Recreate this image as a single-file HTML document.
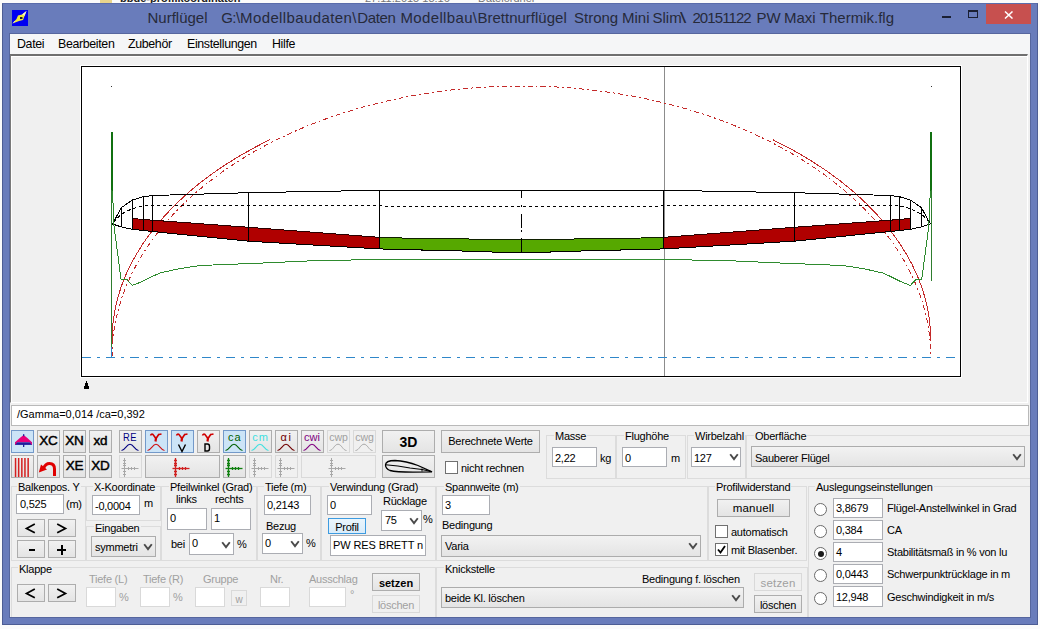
<!DOCTYPE html>
<html><head><meta charset="utf-8">
<style>
*{margin:0;padding:0;box-sizing:border-box}
html,body{width:1040px;height:629px;overflow:hidden;background:#fbfbfb;font-family:"Liberation Sans",sans-serif;font-size:11px;color:#000}
.a{position:absolute}
.t{position:absolute;white-space:nowrap;line-height:13px}
#frame{left:2px;top:3px;width:1036px;height:622px;background:#697cbb;border:1px solid #4d5d94;border-top-color:#5a6cab}
#inner{left:9px;top:33px;width:1022px;height:585px;border:1px solid #56669e}
.ti{top:9px;font-size:15px;color:#262a3a;line-height:18px}
#menubar{left:10px;top:34px;width:1020px;height:20px;background:#f5f6f7}
.mi{position:absolute;top:3px;font-size:12.4px;line-height:15px;color:#000;letter-spacing:-0.35px}
#client{left:10px;top:54px;width:1020px;height:563px;background:#f0f0f0}
#gpanel{left:10px;top:54px;width:1018px;height:349px;border-top:2px solid #6f6f6f;border-left:1px solid #7a7a7a;border-right:1px solid #fff;border-bottom:1px solid #fff;box-shadow:inset 1px 1px 0 #fff}
.inp{position:absolute;background:#fff;border:1px solid #abadb3}
.btn{position:absolute;background:linear-gradient(#f1f1f1,#e4e4e4);border:1px solid #adadad}
.btnh{position:absolute;background:#cce4f7;border:1px solid #7399c9}
.btnd{position:absolute;background:#f0f0f0;border:1px solid #d9d9d9}
.gl{position:absolute;border:1px solid #dcdcdc}
.g{color:#a0a0a0}
.l{letter-spacing:-0.25px;margin-top:1px}
.bb{text-align:center;font-size:15px;font-weight:bold;line-height:15px}
.dd{position:absolute;background:linear-gradient(#f2f2f2,#e4e4e4);border:1px solid #acacac}
.chev{position:absolute;width:7px;height:7px;border-right:2px solid #3c3c3c;border-bottom:2px solid #3c3c3c;transform:rotate(45deg) scale(0.8,0.8)}
.cb{position:absolute;width:13px;height:13px;background:#fff;border:1px solid #707070}
.rad{position:absolute;width:13px;height:13px;border-radius:50%;background:#fff;border:1px solid #6a6a6a}
.dis{border-color:#d9d9d9}
</style></head><body>
<!-- background explorer strip -->
<div class="a" style="left:100px;top:0;width:12px;height:3px;background:#e8d48c"></div>
<div class="t" style="left:120px;top:-8px;font-weight:bold;font-size:11px;color:#222">bbde-profilkoordinaten</div>
<div class="t" style="left:365px;top:-8px;font-size:11px;color:#777">27.11.2015 18:16</div>
<div class="t" style="left:478px;top:-8px;font-size:11px;color:#777">Dateiordner</div>

<div id="frame" class="a"></div><div id="inner" class="a"></div>
<!-- app icon -->
<svg class="a" style="left:12px;top:10px" width="16" height="16" viewBox="0 0 16 16">
<rect width="16" height="16" fill="#0000f0"/>
<path d="M0.5 13.5 L4.5 9 L6 5.5 L10 4.5 L14.5 1 L12.5 6 L11 10 L7 11 Z" fill="#f2ea3a"/>
<path d="M10 4.5 L14.5 1 L12.5 6 L11.5 5 Z" fill="#f4f4d0"/>
<path d="M0.5 13.5 L2.5 11 L3.5 11.5 Z" fill="#f4f4d0"/>
<rect x="8" y="7" width="2.5" height="2" fill="#1a1a40"/>
</svg>
<div class="t ti" style="left:147.5px">Nurflügel</div><div class="t ti" style="left:221.2px;letter-spacing:-0.5px">G:\</div><div class="t ti" style="left:240px;letter-spacing:0.4px">Modellbaudaten\</div><div class="t ti" style="left:357.3px;letter-spacing:-0.4px">Daten</div><div class="t ti" style="left:400.5px;letter-spacing:0.35px">Modellbau\</div><div class="t ti" style="left:477.5px">Brettnurflügel</div><div class="t ti" style="left:574px">Strong</div><div class="t ti" style="left:622px">Mini</div><div class="t ti" style="left:652.5px">Slim</div><div class="t ti" style="left:680px;transform:scaleX(1.5);transform-origin:left">\</div><div class="t ti" style="left:692.4px;letter-spacing:-0.9px">20151122</div><div class="t ti" style="left:756.5px">PW</div><div class="t ti" style="left:783.9px">Maxi</div><div class="t ti" style="left:819.8px">Thermik.flg</div>
<!-- window buttons -->
<div class="a" style="left:942px;top:16px;width:9px;height:2px;background:#1a1f33"></div>
<div class="a" style="left:968px;top:10px;width:10px;height:8px;border:1px solid #1a1f33;border-top-width:2px"></div>
<div class="a" style="left:986px;top:4px;width:45px;height:20px;background:#c7504f"></div>
<svg class="a" style="left:1004px;top:11px" width="10" height="8" viewBox="0 0 10 8"><path d="M1 0.5 L8.5 7.5 M8.5 0.5 L1 7.5" stroke="#fff" stroke-width="1.5"/></svg>

<div id="menubar" class="a">
<div class="mi" style="left:7px">Datei</div>
<div class="mi" style="left:48px">Bearbeiten</div>
<div class="mi" style="left:118px">Zubehör</div>
<div class="mi" style="left:177px">Einstellungen</div>
<div class="mi" style="left:262px">Hilfe</div>
</div>
<div id="client" class="a"></div><div id="gpanel" class="a"></div>

<div class="a" style="left:86px;top:381px;width:1px;height:2px;background:#000"></div>
<div class="a" style="left:85px;top:383px;width:3px;height:4px;background:#000"></div>
<div class="a" style="left:84px;top:386px;width:5px;height:3px;background:#000"></div>
<!-- GRAPH -->
<div class="a" style="left:80px;top:65px;width:882px;height:313px;background:#fff"></div>
<svg class="a" style="left:0;top:0" width="1040" height="629" viewBox="0 0 1040 629" shape-rendering="crispEdges">
<rect x="81.5" y="66.5" width="879" height="310" fill="#fff" stroke="#000" stroke-width="1"/>
<line x1="664.5" y1="67" x2="664.5" y2="376" stroke="#8c8c8c" stroke-width="1"/>
<!-- blue dash-dot axis -->
<line x1="82" y1="357.5" x2="960" y2="357.5" stroke="#2f87c9" stroke-width="1.2" stroke-dasharray="9 6 3 6"/>
<!-- red ellipses -->
<path d="M112 341 A409.4 255 0 0 1 270 139.7 M772.8 139.7 A409.4 255 0 0 1 930.8 341" fill="none" stroke="#c42a2a" stroke-width="1"/>
<path d="M112 357 A409.4 271 0 0 1 930.8 357" fill="none" stroke="#c42a2a" stroke-width="1" stroke-dasharray="5 3 2 3"/>
<!-- tip verticals -->
<rect x="111" y="132" width="2" height="59" fill="#107010"/>
<rect x="930" y="132" width="2" height="59" fill="#107010"/>
<line x1="111.5" y1="190" x2="111.5" y2="347" stroke="#2e7d2e" stroke-width="1"/>
<line x1="111.5" y1="347" x2="111.5" y2="357" stroke="#2f87c9" stroke-width="1"/>
<line x1="931.5" y1="190" x2="931.5" y2="281" stroke="#2e7d2e" stroke-width="1"/>
<rect x="111" y="86" width="1" height="1" fill="#333"/>
<rect x="931" y="86" width="1" height="1" fill="#333"/>
<polygon points="132.5,218.5 152.5,220.2 248.7,227.3 379.0,237.3 379.0,248.9 248.7,241.2 152.5,231.5 132.5,229.3" fill="#b00000" stroke="#2a0000" stroke-width="1"/>
<polygon points="910.3,218.5 890.3,220.2 794.1,227.3 663.8,237.3 663.8,248.9 794.1,241.2 890.3,231.5 910.3,229.3" fill="#b00000" stroke="#2a0000" stroke-width="1"/>
<polygon points="379.0,237.3 402.0,238.0 414.0,238.4 450.0,238.8 486.0,239.2 498.0,239.2 521.4,239.2 521.4,252.2 498.0,252.2 486.0,251.8 450.0,250.6 414.0,249.8 402.0,249.6 379.0,248.9" fill="#56a800" stroke="#102000" stroke-width="1"/>
<polygon points="663.8,237.3 640.8,238.0 628.8,238.4 592.8,238.8 556.8,239.2 544.8,239.2 521.4,239.2 521.4,252.2 544.8,252.2 556.8,251.8 592.8,250.6 628.8,249.8 640.8,249.6 663.8,248.9" fill="#56a800" stroke="#102000" stroke-width="1"/>
<polyline points="112.4,224.0 121.5,207.5 132.5,200.0 143.0,196.8 152.5,195.5 248.7,192.7 379.0,190.3 521.4,190.2 663.8,190.3 794.1,192.7 890.3,195.5 899.8,196.8 910.3,200.0 921.3,207.5 930.4,224.0" fill="none" stroke="#000" stroke-width="1"/>
<polyline points="112.4,224.0 121.5,227.0 132.5,229.3 152.5,231.5 248.7,241.2 379.0,248.9 402.0,249.6 450.0,250.6 498.0,252.2 521.4,252.2 544.8,252.2 592.8,250.6 640.8,249.6 663.8,248.9 794.1,241.2 890.3,231.5 910.3,229.3 921.3,227.0 930.4,224.0" fill="none" stroke="#000" stroke-width="1"/>
<line x1="121.5" y1="207.5" x2="121.5" y2="227.0" stroke="#000" stroke-width="1"/>
<line x1="921.3" y1="207.5" x2="921.3" y2="227.0" stroke="#000" stroke-width="1"/>
<line x1="132.5" y1="200.0" x2="132.5" y2="229.3" stroke="#000" stroke-width="1"/>
<line x1="910.3" y1="200.0" x2="910.3" y2="229.3" stroke="#000" stroke-width="1"/>
<line x1="143.0" y1="196.8" x2="143.0" y2="230.5" stroke="#000" stroke-width="1"/>
<line x1="899.8" y1="196.8" x2="899.8" y2="230.5" stroke="#000" stroke-width="1"/>
<line x1="152.5" y1="195.5" x2="152.5" y2="231.5" stroke="#000" stroke-width="1"/>
<line x1="890.3" y1="195.5" x2="890.3" y2="231.5" stroke="#000" stroke-width="1"/>
<line x1="248.7" y1="192.7" x2="248.7" y2="241.2" stroke="#000" stroke-width="1"/>
<line x1="794.1" y1="192.7" x2="794.1" y2="241.2" stroke="#000" stroke-width="1"/>
<line x1="379.0" y1="190.3" x2="379.0" y2="248.9" stroke="#000" stroke-width="1"/>
<line x1="663.8" y1="190.3" x2="663.8" y2="248.9" stroke="#000" stroke-width="1"/>
<line x1="521.4" y1="190" x2="521.4" y2="252" stroke="#000" stroke-width="1" stroke-dasharray="8 7 2 7 14 2 2 6 14"/>
<polyline points="113.5,222.0 121.5,214.0 132.5,208.5 143.0,206.0 152.5,205.5 521.4,206.3 890.3,205.5 899.8,206.0 910.3,208.5 921.3,214.0 929.3,222.0" fill="none" stroke="#000" stroke-width="1" stroke-dasharray="3.5 2.5"/>
<polyline points="112.5,191.0 114.0,226.0 121.0,279.0 127.0,279.7 132.4,285.4 142.0,281.6 153.4,276.0 160.0,273.0 179.0,268.7 200.0,265.5 256.0,263.3 314.0,260.7 378.0,259.5 405.8,259.2 493.0,259.8 521.4,259.8 549.8,259.8 637.0,259.2 664.8,259.5 728.8,260.7 786.8,263.3 842.8,265.5 863.8,268.7 882.8,273.0 889.4,276.0 900.8,281.6 910.4,285.4 915.8,279.7 921.8,279.0 928.8,226.0 930.3,191.0" fill="none" stroke="#2e8b2e" stroke-width="1"/>

</svg>
<!-- STATUS -->
<div class="inp" style="left:11px;top:405px;width:1018px;height:21px;border-color:#b9b9b9"></div>
<div class="t" style="left:17px;top:408px">/Gamma=0,014 /ca=0,392</div>

<!-- TOOLBAR row 1 -->
<div class="btnh" style="left:11px;top:430px;width:23px;height:23px"></div>
<svg class="a" style="left:11px;top:430px" width="23" height="23" viewBox="0 0 23 23">
<path d="M12.6 5 Q8.5 8 4 12.3 H21 Q16.7 8 12.6 5 Z" fill="#e8007a"/>
<rect x="4" y="12.3" width="17" height="2.6" fill="#1c1c9c"/>
<path d="M4 12.3 L6.5 12.3 L4 14.9 Z M21 12.3 L18.5 12.3 L21 14.9 Z" fill="#e8007a"/>
<rect x="12" y="14" width="1.3" height="3" fill="#1c1c9c"/><rect x="12" y="4.2" width="1.3" height="2" fill="#1c1c9c"/>
</svg>
<div class="btn" style="left:37px;top:430px;width:23px;height:23px"></div>
<div class="t" style="left:37px;top:434px;width:23px;text-align:center;font-size:13.5px;font-weight:normal;-webkit-text-stroke:0.45px #000;letter-spacing:-0.2px">XC</div>
<div class="btn" style="left:63px;top:430px;width:23px;height:23px"></div>
<div class="t" style="left:63px;top:434px;width:23px;text-align:center;font-size:13.5px;font-weight:normal;-webkit-text-stroke:0.45px #000;letter-spacing:-0.2px">XN</div>
<div class="btn" style="left:89px;top:430px;width:23px;height:23px"></div>
<div class="t" style="left:89px;top:434px;width:23px;text-align:center;font-size:13.5px;font-weight:normal;-webkit-text-stroke:0.45px #000;letter-spacing:-0.2px">xd</div>

<div class="btn" style="left:119px;top:430px;width:23px;height:23px"></div>
<svg class="a" style="left:119px;top:430px" width="23" height="23" viewBox="0 0 23 23">
<text x="11" y="11.3" text-anchor="middle" font-family="Liberation Sans" font-size="11" letter-spacing="0.5" transform="translate(11 0) scale(0.85 1) translate(-11 0)" fill="#000080">RE</text>
<path d="M2.5 20.5 C6 20.5 7.5 14.2 11 14.2 C14.5 14.2 16 20.5 19.5 20.5" fill="none" stroke="#000080" stroke-width="1.1"/>
</svg>
<div class="btnh" style="left:145px;top:430px;width:23px;height:23px"></div>
<svg class="a" style="left:145px;top:430px" width="23" height="23" viewBox="0 0 23 23">
<path d="M5.5 5.5 Q6.5 3.5 8 4.5 L11 8.5 L14 4 M14 4.5 L16.5 4" fill="none" stroke="#d00000" stroke-width="1.6"/><path d="M11 8 L10.5 11.5" stroke="#d00000" stroke-width="2.2"/>
<path d="M2.5 20.5 C6 20.5 7.5 14.2 11 14.2 C14.5 14.2 16 20.5 19.5 20.5" fill="none" stroke="#d01010" stroke-width="1.1"/>
</svg>
<div class="btnh" style="left:171px;top:430px;width:23px;height:23px"></div>
<svg class="a" style="left:171px;top:430px" width="23" height="23" viewBox="0 0 23 23">
<path d="M5.5 5.5 Q6.5 3.5 8 4.5 L11 8.5 L14 4 M14 4.5 L16.5 4" fill="none" stroke="#d00000" stroke-width="1.6"/><path d="M11 8 L10.5 11.5" stroke="#d00000" stroke-width="2.2"/>
<path d="M7.5 14.5 L11 21.5 L14.5 14.5" fill="none" stroke="#000" stroke-width="1.4"/>
</svg>
<div class="btn" style="left:197px;top:430px;width:23px;height:23px"></div>
<svg class="a" style="left:197px;top:430px" width="23" height="23" viewBox="0 0 23 23">
<path d="M5.5 5.5 Q6.5 3.5 8 4.5 L11 8.5 L14 4 M14 4.5 L16.5 4" fill="none" stroke="#d00000" stroke-width="1.6"/><path d="M11 8 L10.5 11.5" stroke="#d00000" stroke-width="2.2"/>
<path d="M8 14 H10.5 Q12.5 14 12.5 16.5 V18.5 Q12.5 21 10.5 21 H8 Z" fill="none" stroke="#000" stroke-width="1.4"/>
</svg>
<div class="btnh" style="left:223px;top:430px;width:23px;height:23px"></div>
<svg class="a" style="left:223px;top:430px" width="23" height="23" viewBox="0 0 23 23">
<text x="11.7" y="11" text-anchor="middle" font-family="Liberation Sans" font-size="11" letter-spacing="1" fill="#006000">ca</text>
<path d="M2.5 20.5 C6 20.5 7.5 14.2 11 14.2 C14.5 14.2 16 20.5 19.5 20.5" fill="none" stroke="#006000" stroke-width="1.1"/>
</svg>
<div class="btn" style="left:249px;top:430px;width:23px;height:23px"></div>
<svg class="a" style="left:249px;top:430px" width="23" height="23" viewBox="0 0 23 23">
<text x="11.5" y="11" text-anchor="middle" font-family="Liberation Sans" font-size="11" letter-spacing="1" fill="#40e0e0">cm</text>
<path d="M2.5 20.5 C6 20.5 7.5 14.2 11 14.2 C14.5 14.2 16 20.5 19.5 20.5" fill="none" stroke="#40e0e0" stroke-width="1.1"/>
</svg>
<div class="btn" style="left:275px;top:430px;width:23px;height:23px"></div>
<svg class="a" style="left:275px;top:430px" width="23" height="23" viewBox="0 0 23 23">
<text x="11.5" y="11" text-anchor="middle" font-family="Liberation Sans" font-size="11" letter-spacing="1.5" fill="#700000">αi</text>
<path d="M2.5 20.5 C6 20.5 7.5 14.2 11 14.2 C14.5 14.2 16 20.5 19.5 20.5" fill="none" stroke="#700000" stroke-width="1.1"/>
</svg>
<div class="btn" style="left:301px;top:430px;width:23px;height:23px"></div>
<svg class="a" style="left:301px;top:430px" width="23" height="23" viewBox="0 0 23 23">
<text x="11" y="11" text-anchor="middle" font-family="Liberation Sans" font-size="11" letter-spacing="0" fill="#800080">cwi</text>
<path d="M2.5 20.5 C6 20.5 7.5 14.2 11 14.2 C14.5 14.2 16 20.5 19.5 20.5" fill="none" stroke="#800080" stroke-width="1.1"/>
</svg>
<div class="btnd" style="left:327px;top:430px;width:23px;height:23px"></div>
<svg class="a" style="left:327px;top:430px" width="23" height="23" viewBox="0 0 23 23">
<text x="11.5" y="11" text-anchor="middle" font-family="Liberation Sans" font-size="10.5" fill="#a0a0a0">cwp</text>
<path d="M2.5 20.5 C6 20.5 7.5 14.2 11 14.2 C14.5 14.2 16 20.5 19.5 20.5" fill="none" stroke="#a8a8a8" stroke-width="1"/>
</svg>
<div class="btnd" style="left:353px;top:430px;width:23px;height:23px"></div>
<svg class="a" style="left:353px;top:430px" width="23" height="23" viewBox="0 0 23 23">
<text x="11.5" y="11" text-anchor="middle" font-family="Liberation Sans" font-size="10.5" fill="#a0a0a0">cwg</text>
<path d="M2.5 20.5 C6 20.5 7.5 14.2 11 14.2 C14.5 14.2 16 20.5 19.5 20.5" fill="none" stroke="#a8a8a8" stroke-width="1"/>
</svg>
<div class="btn" style="left:382px;top:430px;width:53px;height:23px"></div>
<div class="t" style="left:382px;top:435px;width:53px;text-align:center;font-size:14px;font-weight:bold;line-height:14px">3D</div>

<!-- TOOLBAR row 2 -->
<div class="btn" style="left:11px;top:455px;width:23px;height:23px"></div>
<svg class="a" style="left:11px;top:455px" width="23" height="23" viewBox="0 0 23 23">
<g fill="#d42020"><rect x="3.8" y="3" width="1.5" height="19"/><rect x="6.9" y="3" width="1.5" height="19"/><rect x="10.1" y="3" width="1.5" height="19"/><rect x="13.2" y="3" width="1.5" height="19"/><rect x="16.4" y="3" width="1.5" height="19"/></g>
</svg>
<div class="btn" style="left:37px;top:455px;width:23px;height:23px"></div>
<svg class="a" style="left:37px;top:455px" width="23" height="23" viewBox="0 0 23 23">
<path d="M6.5 13.5 Q8.5 8.5 12.5 8.5 Q17.5 8.5 17.5 14 V21" fill="none" stroke="#e00000" stroke-width="3"/>
<path d="M1.8 17.5 L4 9.5 L10 14.5 Z" fill="#e00000"/>
</svg>
<div class="btn" style="left:63px;top:455px;width:23px;height:23px"></div>
<div class="t" style="left:63px;top:459px;width:23px;text-align:center;font-size:13.5px;font-weight:normal;-webkit-text-stroke:0.45px #000;letter-spacing:-0.2px">XE</div>
<div class="btn" style="left:89px;top:455px;width:23px;height:23px"></div>
<div class="t" style="left:89px;top:459px;width:23px;text-align:center;font-size:13.5px;font-weight:normal;-webkit-text-stroke:0.45px #000;letter-spacing:-0.2px">XD</div>
<div class="btnd" style="left:119px;top:455px;width:23px;height:23px"></div>
<svg class="a" style="left:119px;top:455px" width="23" height="23" viewBox="0 0 23 23"><g stroke="#a8a8a8" stroke-width="1"><line x1="5.5" y1="3" x2="5.5" y2="22"/><line x1="2.5" y1="13.5" x2="19.5" y2="13.5"/><path d="M4 5.5h3M4 8.5h3M4 10.5h3M4 16.5h3M4 19.5h3M9.5 12v3M12.5 12v3M15.5 12v3"/></g></svg>
<div class="btn" style="left:145px;top:455px;width:75px;height:23px"></div>
<svg class="a" style="left:170px;top:455px" width="23" height="23" viewBox="0 0 23 23"><g stroke="#d02020" stroke-width="1.3"><line x1="5.5" y1="3" x2="5.5" y2="22"/><line x1="2.5" y1="13.5" x2="19.5" y2="13.5"/><path d="M4 5.5h3M4 8.5h3M4 10.5h3M4 16.5h3M4 19.5h3M9.5 12v3M12.5 12v3M15.5 12v3"/></g></svg>
<div class="btn" style="left:223px;top:455px;width:23px;height:23px"></div>
<svg class="a" style="left:223px;top:455px" width="23" height="23" viewBox="0 0 23 23"><g stroke="#108010" stroke-width="1.3"><line x1="5.5" y1="3" x2="5.5" y2="22"/><line x1="2.5" y1="13.5" x2="19.5" y2="13.5"/><path d="M4 5.5h3M4 8.5h3M4 10.5h3M4 16.5h3M4 19.5h3M9.5 12v3M12.5 12v3M15.5 12v3"/></g></svg>
<div class="btnd" style="left:249px;top:455px;width:23px;height:23px"></div>
<svg class="a" style="left:249px;top:455px" width="23" height="23" viewBox="0 0 23 23"><g stroke="#a8a8a8" stroke-width="1"><line x1="5.5" y1="3" x2="5.5" y2="22"/><line x1="2.5" y1="13.5" x2="19.5" y2="13.5"/><path d="M4 5.5h3M4 8.5h3M4 10.5h3M4 16.5h3M4 19.5h3M9.5 12v3M12.5 12v3M15.5 12v3"/></g></svg>
<div class="btnd" style="left:275px;top:455px;width:23px;height:23px"></div>
<svg class="a" style="left:275px;top:455px" width="23" height="23" viewBox="0 0 23 23"><g stroke="#a8a8a8" stroke-width="1"><line x1="5.5" y1="3" x2="5.5" y2="22"/><line x1="2.5" y1="13.5" x2="19.5" y2="13.5"/><path d="M4 5.5h3M4 8.5h3M4 10.5h3M4 16.5h3M4 19.5h3M9.5 12v3M12.5 12v3M15.5 12v3"/></g></svg>
<div class="btnd" style="left:301px;top:455px;width:75px;height:23px"></div>
<svg class="a" style="left:326px;top:455px" width="23" height="23" viewBox="0 0 23 23"><g stroke="#a8a8a8" stroke-width="1"><line x1="5.5" y1="3" x2="5.5" y2="22"/><line x1="2.5" y1="13.5" x2="19.5" y2="13.5"/><path d="M4 5.5h3M4 8.5h3M4 10.5h3M4 16.5h3M4 19.5h3M9.5 12v3M12.5 12v3M15.5 12v3"/></g></svg>
<div class="btn" style="left:382px;top:455px;width:53px;height:23px"></div>
<svg class="a" style="left:382px;top:455px" width="53" height="23" viewBox="0 0 53 23">
<path d="M3.5 10 Q3.5 5.5 13 5.5 Q24 6 36 10.5 L50 16.8 L31 17.2 Q14 17.2 8 15.5 Q3.5 13.5 3.5 10 Z" fill="none" stroke="#000" stroke-width="1.3"/>
<path d="M3.5 9.8 Q16 10.5 28 13 L40 14.5 L49 16.5" fill="none" stroke="#000" stroke-width="1.1"/>
<path d="M40 13.5 V16.5" stroke="#000" stroke-width="1"/>
</svg>

<!-- GROUP BOX LINES -->
<div class="gl" style="left:11px;top:486px;width:75px;height:75px"></div>
<div class="gl" style="left:86px;top:486px;width:75px;height:35px"></div>
<div class="gl" style="left:86px;top:526px;width:75px;height:35px"></div>
<div class="gl" style="left:161px;top:486px;width:96px;height:75px"></div>
<div class="gl" style="left:257px;top:486px;width:64px;height:75px"></div>
<div class="gl" style="left:321px;top:486px;width:115px;height:75px"></div>
<div class="gl" style="left:436px;top:486px;width:272px;height:75px"></div>
<div class="gl" style="left:708px;top:486px;width:99px;height:75px"></div>
<div class="gl" style="left:808px;top:486px;width:222px;height:131px;border-right:none;border-bottom:none"></div>
<div class="gl" style="left:11px;top:567px;width:425px;height:50px;border-bottom:none"></div>
<div class="gl" style="left:436px;top:567px;width:372px;height:50px;border-bottom:none"></div>

<!-- Balkenpos -->
<div class="t l" style="left:17px;top:480px;background:#f0f0f0;padding:0 1px">Balkenpos. Y</div>
<div class="inp" style="left:16px;top:494px;width:48px;height:20px"></div>
<div class="t l" style="left:20px;top:497px">0,525</div>
<div class="t l" style="left:66px;top:497px">(m)</div>
<div class="btn" style="left:17px;top:519px;width:28px;height:18px"></div>
<svg class="a" style="left:17px;top:519px" width="28" height="18" viewBox="0 0 28 18"><path d="M17.8 5 L9.5 9.4 L17.8 13.8" fill="none" stroke="#000" stroke-width="1.7" stroke-linejoin="miter"/></svg>
<div class="btn" style="left:48px;top:519px;width:28px;height:18px"></div>
<svg class="a" style="left:48px;top:519px" width="28" height="18" viewBox="0 0 28 18"><path d="M9.2 5 L17.5 9.4 L9.2 13.8" fill="none" stroke="#000" stroke-width="1.7" stroke-linejoin="miter"/></svg>
<div class="btn" style="left:17px;top:540px;width:28px;height:18px"></div>
<div class="a" style="left:29px;top:549px;width:6px;height:2px;background:#000"></div>
<div class="btn" style="left:48px;top:540px;width:28px;height:18px"></div>
<div class="a" style="left:57px;top:549px;width:9px;height:2px;background:#000"></div><div class="a" style="left:60.5px;top:545px;width:2px;height:10px;background:#000"></div>

<!-- X-Koordinate -->
<div class="t l" style="left:93px;top:480px;background:#f0f0f0;padding:0 1px">X-Koordinate</div>
<div class="inp" style="left:92px;top:495px;width:48px;height:20px"></div>
<div class="t l" style="left:95px;top:499px">-0,0004</div>
<div class="t l" style="left:144px;top:496px">m</div>
<div class="t l" style="left:94px;top:521px;background:#f0f0f0;padding:0 1px">Eingaben</div>
<div class="dd" style="left:91px;top:536px;width:65px;height:21px"></div>
<div class="t l" style="left:95px;top:540px">symmetri</div>
<svg class="a" style="left:143px;top:543px" width="10" height="9" viewBox="0 0 10 9"><path d="M1.8 2 L5 6.2 L8.2 2" fill="none" stroke="#4a4a4a" stroke-width="1.9" stroke-linecap="square"/></svg>

<!-- Pfeilwinkel -->
<div class="t l" style="left:169px;top:480px;background:#f0f0f0;padding:0 1px">Pfeilwinkel (Grad)</div>
<div class="t l" style="left:176px;top:492px">links</div>
<div class="t l" style="left:215px;top:492px">rechts</div>
<div class="inp" style="left:167px;top:508px;width:40px;height:22px"></div>
<div class="t l" style="left:170px;top:511px">0</div>
<div class="inp" style="left:211px;top:508px;width:40px;height:22px"></div>
<div class="t l" style="left:214px;top:511px">1</div>
<div class="t l" style="left:171px;top:537px">bei</div>
<div class="inp" style="left:189px;top:533px;width:45px;height:22px"></div>
<div class="t l" style="left:192px;top:536px">0</div>
<svg class="a" style="left:221px;top:541px" width="10" height="9" viewBox="0 0 10 9"><path d="M1.8 2 L5 6.2 L8.2 2" fill="none" stroke="#4a4a4a" stroke-width="1.9" stroke-linecap="square"/></svg>
<div class="t l" style="left:237px;top:537px">%</div>

<!-- Tiefe -->
<div class="t l" style="left:264px;top:480px;background:#f0f0f0;padding:0 1px">Tiefe (m)</div>
<div class="inp" style="left:264px;top:495px;width:47px;height:20px"></div>
<div class="t l" style="left:267px;top:498px">0,2143</div>
<div class="t l" style="left:266px;top:519px">Bezug</div>
<div class="inp" style="left:262px;top:533px;width:41px;height:21px"></div>
<div class="t l" style="left:265px;top:536px">0</div>
<svg class="a" style="left:290px;top:540px" width="10" height="9" viewBox="0 0 10 9"><path d="M1.8 2 L5 6.2 L8.2 2" fill="none" stroke="#4a4a4a" stroke-width="1.9" stroke-linecap="square"/></svg>
<div class="t l" style="left:306px;top:536px">%</div>

<!-- Verwindung -->
<div class="t l" style="left:329px;top:480px;background:#f0f0f0;padding:0 1px">Verwindung (Grad)</div>
<div class="inp" style="left:327px;top:495px;width:45px;height:20px"></div>
<div class="t l" style="left:330px;top:498px">0</div>
<div class="t l" style="left:383px;top:494px">Rücklage</div>
<div class="inp" style="left:381px;top:510px;width:41px;height:21px"></div>
<div class="t l" style="left:385px;top:513px">75</div>
<svg class="a" style="left:409px;top:517px" width="10" height="9" viewBox="0 0 10 9"><path d="M1.8 2 L5 6.2 L8.2 2" fill="none" stroke="#4a4a4a" stroke-width="1.9" stroke-linecap="square"/></svg>
<div class="t l" style="left:423px;top:512px">%</div>
<div class="btn" style="left:328px;top:518px;width:38px;height:16px;border-color:#3d9be0;background:linear-gradient(#eaf5fc,#d9ecfa)"></div>
<div class="t l" style="left:328px;top:520px;width:38px;text-align:center">Profil</div>
<div class="inp" style="left:330px;top:535px;width:96px;height:21px"></div>
<div class="t" style="left:333px;top:539px;width:92px;overflow:hidden;font-size:11px;letter-spacing:-0.1px">PW RES BRETT n</div>

<!-- Spannweite -->
<div class="t l" style="left:444px;top:480px;background:#f0f0f0;padding:0 1px">Spannweite (m)</div>
<div class="inp" style="left:442px;top:495px;width:48px;height:20px"></div>
<div class="t l" style="left:445px;top:498px">3</div>
<div class="t l" style="left:442px;top:518px">Bedingung</div>
<div class="dd" style="left:441px;top:535px;width:260px;height:22px"></div>
<div class="t l" style="left:445px;top:539px">Varia</div>
<svg class="a" style="left:688px;top:542px" width="10" height="9" viewBox="0 0 10 9"><path d="M1.8 2 L5 6.2 L8.2 2" fill="none" stroke="#4a4a4a" stroke-width="1.9" stroke-linecap="square"/></svg>

<!-- Profilwiderstand -->
<div class="t l" style="left:715px;top:480px;background:#f0f0f0;padding:0 1px">Profilwiderstand</div>
<div class="btn" style="left:717px;top:499px;width:73px;height:18px"></div>
<div class="t l" style="left:717px;top:501px;width:73px;text-align:center;font-size:11.5px;letter-spacing:0.2px">manuell</div>
<div class="cb" style="left:715px;top:525px"></div>
<div class="t l" style="left:731px;top:525px">automatisch</div>
<div class="cb" style="left:715px;top:543px"></div>
<svg class="a" style="left:715px;top:543px" width="13" height="13" viewBox="0 0 13 13"><path d="M3 6.5 L5.5 9.5 L10 3" fill="none" stroke="#000" stroke-width="1.8"/></svg>
<div class="t l" style="left:731px;top:543px">mit Blasenber.</div>

<!-- Auslegungseinstellungen -->
<div class="t l" style="left:815px;top:480px;background:#f0f0f0;padding:0 1px">Auslegungseinstellungen</div>
<div class="rad" style="left:814px;top:503px"></div>
<div class="inp" style="left:833px;top:498px;width:50px;height:20px"></div>
<div class="t l" style="left:836px;top:501px">3,8679</div>
<div class="t l" style="left:887px;top:501px">Flügel-Anstellwinkel in Grad</div>
<div class="rad" style="left:814px;top:525px"></div>
<div class="inp" style="left:833px;top:520px;width:50px;height:20px"></div>
<div class="t l" style="left:836px;top:523px">0,384</div>
<div class="t l" style="left:887px;top:523px">CA</div>
<div class="rad" style="left:814px;top:547px"><div style="position:absolute;left:2.5px;top:2.5px;width:6px;height:6px;border-radius:50%;background:#1a1a1a"></div></div>
<div class="inp" style="left:833px;top:542px;width:50px;height:20px"></div>
<div class="t l" style="left:836px;top:545px">4</div>
<div class="t l" style="left:887px;top:545px">Stabilitätsmaß in % von lu</div>
<div class="rad" style="left:814px;top:569px"></div>
<div class="inp" style="left:833px;top:564px;width:50px;height:20px"></div>
<div class="t l" style="left:836px;top:567px">0,0443</div>
<div class="t l" style="left:887px;top:567px">Schwerpunktrücklage in m</div>
<div class="rad" style="left:814px;top:592px"></div>
<div class="inp" style="left:833px;top:586px;width:50px;height:21px"></div>
<div class="t l" style="left:836px;top:590px">12,948</div>
<div class="t l" style="left:887px;top:590px">Geschwindigkeit in m/s</div>

<!-- Oberflaeche & Masse etc -->
<div class="gl" style="left:546px;top:435px;width:70px;height:44px"></div>
<div class="gl" style="left:616px;top:435px;width:70px;height:44px"></div>
<div class="gl" style="left:687px;top:435px;width:59px;height:44px"></div>
<div class="gl" style="left:746px;top:435px;width:284px;height:44px;border-right:none"></div>
<div class="btn" style="left:441px;top:430px;width:99px;height:23px"></div>
<div class="t l" style="left:441px;top:434px;width:99px;text-align:center">Berechnete Werte</div>
<div class="cb" style="left:445px;top:461px"></div>
<div class="t l" style="left:461px;top:461px">nicht rechnen</div>
<div class="t l" style="left:554px;top:429px;background:#f0f0f0;padding:0 1px">Masse</div>
<div class="inp" style="left:552px;top:447px;width:45px;height:20px"></div>
<div class="t l" style="left:555px;top:451px">2,22</div>
<div class="t l" style="left:600px;top:451px">kg</div>
<div class="t l" style="left:624px;top:429px;background:#f0f0f0;padding:0 1px">Flughöhe</div>
<div class="inp" style="left:622px;top:447px;width:45px;height:20px"></div>
<div class="t l" style="left:625px;top:451px">0</div>
<div class="t l" style="left:671px;top:451px">m</div>
<div class="t l" style="left:694px;top:429px;background:#f0f0f0;padding:0 1px">Wirbelzahl</div>
<div class="inp" style="left:691px;top:447px;width:50px;height:20px"></div>
<div class="t l" style="left:694px;top:451px">127</div>
<svg class="a" style="left:729px;top:453px" width="10" height="9" viewBox="0 0 10 9"><path d="M1.8 2 L5 6.2 L8.2 2" fill="none" stroke="#4a4a4a" stroke-width="1.9" stroke-linecap="square"/></svg>
<div class="t l" style="left:754px;top:429px;background:#f0f0f0;padding:0 1px">Oberfläche</div>
<div class="dd" style="left:751px;top:446px;width:274px;height:21px"></div>
<div class="t l" style="left:755px;top:451px">Sauberer Flügel</div>
<svg class="a" style="left:1012px;top:453px" width="10" height="9" viewBox="0 0 10 9"><path d="M1.8 2 L5 6.2 L8.2 2" fill="none" stroke="#4a4a4a" stroke-width="1.9" stroke-linecap="square"/></svg>

<!-- Klappe -->
<div class="t l" style="left:18px;top:562px;background:#f0f0f0;padding:0 1px">Klappe</div>
<div class="btn" style="left:17px;top:584px;width:28px;height:18px"></div>
<svg class="a" style="left:17px;top:584px" width="28" height="18" viewBox="0 0 28 18"><path d="M17.8 5 L9.5 9.4 L17.8 13.8" fill="none" stroke="#000" stroke-width="1.7" stroke-linejoin="miter"/></svg>
<div class="btn" style="left:48px;top:584px;width:28px;height:18px"></div>
<svg class="a" style="left:48px;top:584px" width="28" height="18" viewBox="0 0 28 18"><path d="M9.2 5 L17.5 9.4 L9.2 13.8" fill="none" stroke="#000" stroke-width="1.7" stroke-linejoin="miter"/></svg>
<div class="t l g" style="left:89px;top:572px">Tiefe (L)</div>
<div class="inp dis" style="left:86px;top:587px;width:30px;height:20px"></div>
<div class="t l g" style="left:119px;top:590px">%</div>
<div class="t l g" style="left:143px;top:572px">Tiefe (R)</div>
<div class="inp dis" style="left:140px;top:587px;width:30px;height:20px"></div>
<div class="t l g" style="left:173px;top:590px">%</div>
<div class="t l g" style="left:203px;top:572px">Gruppe</div>
<div class="inp dis" style="left:195px;top:587px;width:30px;height:20px"></div>
<div class="btnd" style="left:231px;top:590px;width:16px;height:16px"></div>
<div class="t l g" style="left:231px;top:592px;width:16px;text-align:center;font-size:10px">w</div>
<div class="t l g" style="left:270px;top:572px">Nr.</div>
<div class="inp dis" style="left:260px;top:587px;width:30px;height:20px"></div>
<div class="t l g" style="left:309px;top:572px">Ausschlag</div>
<div class="inp dis" style="left:309px;top:587px;width:37px;height:20px"></div>
<div class="t l g" style="left:350px;top:587px">°</div>
<div class="btn" style="left:372px;top:573px;width:48px;height:18px"></div>
<div class="t l" style="left:372px;top:576px;width:48px;text-align:center;font-weight:bold;letter-spacing:0">setzen</div>
<div class="btnd" style="left:372px;top:595px;width:48px;height:18px"></div>
<div class="t l g" style="left:372px;top:598px;width:48px;text-align:center">löschen</div>

<!-- Knickstelle -->
<div class="t l" style="left:444px;top:562px;background:#f0f0f0;padding:0 1px">Knickstelle</div>
<div class="t l" style="left:642px;top:572px">Bedingung f. löschen</div>
<div class="dd" style="left:441px;top:587px;width:303px;height:21px"></div>
<div class="t l" style="left:445px;top:591px">beide Kl. löschen</div>
<svg class="a" style="left:731px;top:594px" width="10" height="9" viewBox="0 0 10 9"><path d="M1.8 2 L5 6.2 L8.2 2" fill="none" stroke="#4a4a4a" stroke-width="1.9" stroke-linecap="square"/></svg>
<div class="btnd" style="left:754px;top:573px;width:48px;height:18px"></div>
<div class="t l g" style="left:754px;top:576px;width:48px;text-align:center;font-size:11.5px;letter-spacing:0.2px">setzen</div>
<div class="btn" style="left:754px;top:595px;width:48px;height:18px"></div>
<div class="t l" style="left:754px;top:598px;width:48px;text-align:center">löschen</div>

</body></html>
